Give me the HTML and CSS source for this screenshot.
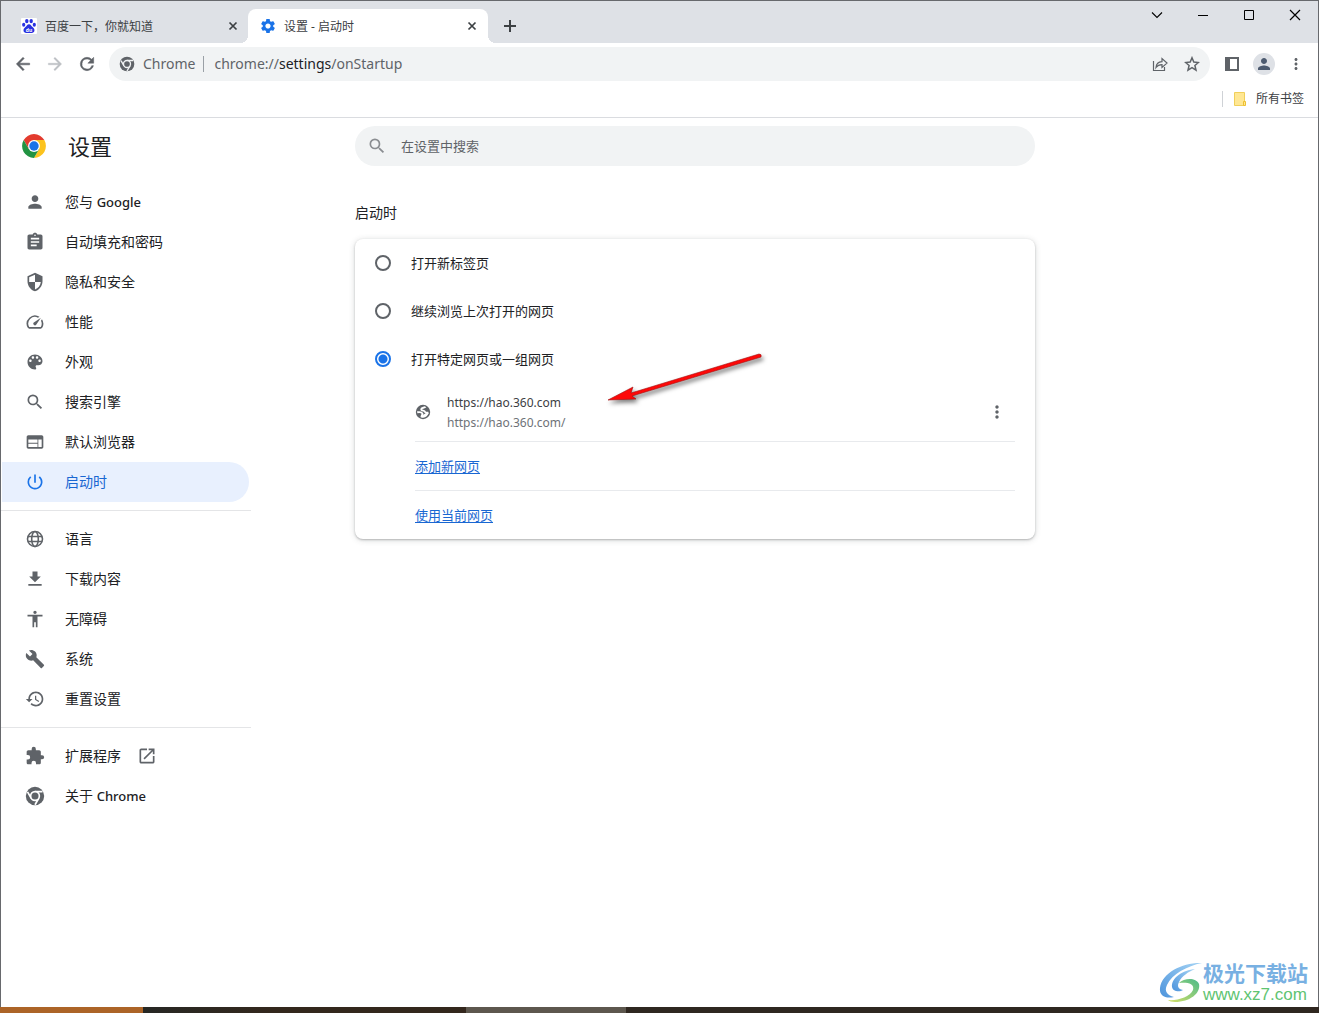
FILE: index.html
```html
<!DOCTYPE html>
<html lang="zh-CN">
<head>
<meta charset="utf-8">
<title>设置 - 启动时</title>
<link rel="stylesheet" href="styles.css">
</head>
<body>
<svg class="defs" aria-hidden="true">
  <symbol id="i-close" viewBox="0 0 16 16"><path d="M4.500 4.500l7 7M11.500 4.500l-7 7" fill="none" stroke="currentColor" stroke-width="1.700"/></symbol>
  <symbol id="i-search" viewBox="0 0 24 24"><path d="M15.500 14h-.79l-.28-.27A6.470 6.470 0 0 0 16 9.500 6.500 6.500 0 1 0 9.500 16c1.610 0 3.090-.59 4.230-1.570l.27.28v.79l5 4.990L20.490 19l-4.990-5zm-6 0C7.010 14 5 11.990 5 9.500S7.010 5 9.500 5 14 7.010 14 9.500 11.990 14 9.500 14z"/></symbol>
  <symbol id="i-person" viewBox="0 0 24 24"><path d="M12 12c2.210 0 4-1.790 4-4s-1.790-4-4-4-4 1.790-4 4 1.790 4 4 4zm0 2c-2.670 0-8 1.340-8 4v2h16v-2c0-2.660-5.330-4-8-4z"/></symbol>
  <symbol id="i-dots" viewBox="0 0 24 24"><path d="M12 8c1.100 0 2-.9 2-2s-.9-2-2-2-2 .9-2 2 .9 2 2 2zm0 2c-1.100 0-2 .9-2 2s.9 2 2 2 2-.9 2-2-.9-2-2-2zm0 6c-1.100 0-2 .9-2 2s.9 2 2 2 2-.9 2-2-.9-2-2-2z"/></symbol>
  <symbol id="i-chrome" viewBox="0 0 48 48">
    <mask id="m-chrome"><rect width="48" height="48" fill="#fff"/><path d="M24 13.500h18M15 29.500L6 14M33 29.500L24 45" fill="none" stroke="#000" stroke-width="4"/><circle cx="24" cy="24" r="12.500" fill="#000"/><circle cx="24" cy="24" r="8.500" fill="#fff"/></mask>
    <circle cx="24" cy="24" r="22" mask="url(#m-chrome)"/>
  </symbol>
</svg>

<div class="window">
  <header class="titlebar">
    <div class="tabs">
      <div class="tab">
        <svg class="ic16" viewBox="0 0 16 16"><rect width="16" height="16" rx="1" fill="#fff"/><g fill="#2932e1"><ellipse cx="5.800" cy="3.100" rx="1.700" ry="2.200"/><ellipse cx="10.200" cy="3.100" rx="1.700" ry="2.200"/><ellipse cx="2.700" cy="6.700" rx="1.600" ry="2"/><ellipse cx="13.300" cy="6.700" rx="1.600" ry="2"/><path d="M8 6.200c1.900 0 2.200 1.700 3.600 2.800 2.900 2.200 2.300 6-.9 6H5.300c-3.200 0-3.800-3.800-.9-6C5.800 7.900 6.100 6.200 8 6.200z"/></g><text x="8" y="13.500" text-anchor="middle" class="paw">du</text></svg>
        <span class="tab-title">百度一下，你就知道</span>
        <button class="plain" aria-label="关闭"><svg class="ic16"><use href="#i-close"/></svg></button>
      </div>
      <div class="tab active">
        <svg class="ic16 gear" viewBox="1 1 22 22"><path d="M19.140 12.940c.04-.3.060-.61.060-.94 0-.32-.02-.64-.07-.94l2.030-1.580c.18-.14.230-.41.120-.61l-1.920-3.320c-.12-.22-.37-.29-.59-.22l-2.390.96c-.5-.38-1.030-.7-1.620-.94l-.36-2.540c-.04-.24-.24-.41-.48-.41h-3.840c-.24 0-.43.17-.47.41l-.36 2.540c-.59.24-1.130.57-1.620.94l-2.390-.96c-.22-.08-.47 0-.59.22L2.740 8.870c-.12.21-.08.47.12.61l2.030 1.580c-.05.3-.09.63-.09.94s.02.64.07.94l-2.030 1.580c-.18.14-.23.41-.12.61l1.920 3.320c.12.22.37.29.59.22l2.390-.96c.5.38 1.030.7 1.620.94l.36 2.540c.05.24.24.41.48.41h3.840c.24 0 .44-.17.47-.41l.36-2.540c.59-.24 1.130-.56 1.620-.94l2.390.96c.22.08.47 0 .59-.22l1.920-3.320c.12-.22.07-.47-.12-.61l-2.010-1.580zM12 15.600c-1.980 0-3.600-1.620-3.600-3.600s1.620-3.600 3.600-3.600 3.600 1.620 3.600 3.600-1.620 3.600-3.600 3.600z"/></svg>
        <span class="tab-title">设置 - 启动时</span>
        <button class="plain" aria-label="关闭"><svg class="ic16"><use href="#i-close"/></svg></button>
      </div>
      <button class="plain new-tab" aria-label="新标签页"><svg class="ic16" viewBox="0 0 16 16"><path d="M8 2v12M2 8h12" fill="none" stroke="currentColor" stroke-width="2"/></svg></button>
    </div>
    <div class="caption">
      <button class="plain" aria-label="搜索标签页"><svg class="ic16" viewBox="0 0 16 16"><path d="M3 5.500l5 5 5-5" fill="none" stroke="currentColor" stroke-width="1.100"/></svg></button>
      <button class="plain" aria-label="最小化"><svg class="ic16" viewBox="0 0 16 16"><path d="M3 8.500h10" fill="none" stroke="currentColor"/></svg></button>
      <button class="plain" aria-label="最大化"><svg class="ic16" viewBox="0 0 16 16"><path d="M3.500 3.500h9v9h-9z" fill="none" stroke="currentColor"/></svg></button>
      <button class="plain" aria-label="关闭窗口"><svg class="ic16" viewBox="0 0 16 16"><path d="M3 3l10 10M13 3L3 13" fill="none" stroke="currentColor" stroke-width="1.200"/></svg></button>
    </div>
  </header>

  <div class="toolbar">
    <button class="plain tool" aria-label="后退"><svg class="ic20" viewBox="0 0 24 24"><path d="M20 11H7.830l5.590-5.590L12 4l-8 8 8 8 1.410-1.410L7.830 13H20z" stroke="currentColor" stroke-width=".6"/></svg></button>
    <button class="plain tool" aria-label="前进" disabled><svg class="ic20" viewBox="0 0 24 24"><path d="M4 11h12.170l-5.590-5.590L12 4l8 8-8 8-1.410-1.410L16.170 13H4z" stroke="currentColor" stroke-width=".4"/></svg></button>
    <button class="plain tool" aria-label="重新加载"><svg class="ic20" viewBox="0 0 24 24"><path d="M17.650 6.350A7.960 7.960 0 0 0 12 4a8 8 0 1 0 7.730 10h-2.080A6 6 0 1 1 12 6c1.660 0 3.140.69 4.220 1.780L13 11h7V4z" stroke="currentColor" stroke-width=".6"/></svg></button>
    <div class="omnibox">
      <svg class="ic16"><use href="#i-chrome"/></svg>
      <span class="origin">Chrome</span>
      <span class="url">chrome://<b>settings</b>/onStartup</span>
      <button class="plain tool" aria-label="分享"><svg class="ic16" viewBox="0 0 16 16"><path d="M1.500 5v9.500h11V11M4 11.500C4.300 7.500 6.500 5.800 10 5.600V2.500l5 4.600-5 4.400V8.600c-2.800 0-4.600.9-6 2.900z" fill="none" stroke="currentColor" stroke-width="1.200"/></svg></button>
      <button class="plain tool" aria-label="收藏"><svg class="ic16" viewBox="0 0 16 16"><path d="M8 1.800l1.800 4.300 4.600.4-3.500 3 1.100 4.600L8 11.700l-4 2.400 1.100-4.600-3.500-3 4.600-.4z" fill="none" stroke="currentColor" stroke-width="1.500"/></svg></button>
    </div>
    <button class="plain tool panel" aria-label="侧边栏"><svg class="ic16" viewBox="0 0 16 16"><path d="M1 1h14v14H1zM6 3v10h7V3z" fill-rule="evenodd"/></svg></button>
    <button class="plain tool" aria-label="用户"><span class="avatar"><svg class="ic18"><use href="#i-person"/></svg></span></button>
    <button class="plain tool" aria-label="更多"><svg class="ic18"><use href="#i-dots"/></svg></button>
  </div>

  <div class="bookmarks">
    <button class="plain all-bookmarks"><svg class="ic16" viewBox="0 0 16 16"><path d="M2.500 1.500h10v13h-10z" fill="#ffe793" stroke="#f0cf5a"/><path d="M11.500 10.500h2v4h-2z" fill="#ffe793" stroke="#eec030"/></svg>所有书签</button>
  </div>

  <div class="settings">
    <aside class="side">
      <div class="brand">
        <svg class="logo" viewBox="0 0 48 48"><path fill="#e33b2e" d="M4.950 13A22 22 0 0 1 43.050 13H24L14.470 29.500z"/><path fill="#fcc31e" d="M43.050 13A22 22 0 0 1 24 46l9.530-16.500L24 13z"/><path fill="#229342" d="M24 46A22 22 0 0 1 4.950 13l9.520 16.500h19.060z"/><circle cx="24" cy="24" r="11" fill="#fff"/><circle cx="24" cy="24" r="8.700" fill="#1a73e8"/></svg>
        <h1>设置</h1>
      </div>
      <nav>
        <a href="#people"><svg class="ic20"><use href="#i-person"/></svg><span>您与 <span class="latin">Google</span></span></a>
        <a href="#autofill"><svg class="ic20" viewBox="0 0 24 24"><path d="M19 3h-4.180C14.400 1.840 13.300 1 12 1c-1.300 0-2.400.84-2.820 2H5c-1.100 0-2 .9-2 2v14c0 1.100.9 2 2 2h14c1.100 0 2-.9 2-2V5c0-1.100-.9-2-2-2zm-7 0c.55 0 1 .45 1 1s-.45 1-1 1-1-.45-1-1 .45-1 1-1zm2 14H7v-2h7v2zm3-4H7v-2h10v2zm0-4H7V7h10v2z"/></svg>自动填充和密码</a>
        <a href="#privacy"><svg class="ic20" viewBox="0 0 24 24"><path d="M12 1L3 5v6c0 5.550 3.840 10.740 9 12 5.160-1.260 9-6.450 9-12V5l-9-4zm0 10.990h7c-.53 4.120-3.280 7.790-7 8.940V12H5V6.300l7-3.110v8.800z"/></svg>隐私和安全</a>
        <a href="#performance"><svg class="ic20" viewBox="0 0 24 24"><path d="M20.380 8.570l-1.230 1.850a8 8 0 0 1-.22 7.580H5.070A8 8 0 0 1 15.580 6.850l1.850-1.230A10 10 0 0 0 3.350 19a2 2 0 0 0 1.720 1h13.850a2 2 0 0 0 1.740-1 10 10 0 0 0-.27-10.440zm-9.790 6.840a2 2 0 0 0 2.830 0l5.660-8.490-8.490 5.660a2 2 0 0 0 0 2.830z"/></svg>性能</a>
        <a href="#appearance"><svg class="ic20" viewBox="0 0 24 24"><path d="M12 3c-4.970 0-9 4.030-9 9s4.030 9 9 9c.83 0 1.500-.67 1.500-1.500 0-.39-.15-.74-.39-1.010-.23-.26-.38-.61-.38-.99 0-.83.67-1.500 1.500-1.500H16c2.760 0 5-2.240 5-5 0-4.420-4.030-8-9-8zm-5.500 9c-.83 0-1.500-.67-1.500-1.500S5.670 9 6.500 9 8 9.670 8 10.500 7.330 12 6.500 12zm3-4C8.670 8 8 7.330 8 6.500S8.670 5 9.500 5s1.500.67 1.500 1.500S10.330 8 9.500 8zm5 0c-.83 0-1.500-.67-1.500-1.500S13.670 5 14.500 5s1.500.67 1.500 1.500S15.330 8 14.500 8zm3 4c-.83 0-1.500-.67-1.500-1.500S16.670 9 17.500 9s1.500.67 1.500 1.500-.67 1.500-1.500 1.500z"/></svg>外观</a>
        <a href="#search"><svg class="ic20"><use href="#i-search"/></svg>搜索引擎</a>
        <a href="#default"><svg class="ic20" viewBox="0 0 24 24"><path d="M20 4H4c-1.100 0-2 .9-2 2v12c0 1.100.9 2 2 2h16c1.100 0 2-.9 2-2V6c0-1.100-.9-2-2-2zm-5 14H4v-4h11v4zm0-5H4V9h11v4zm5 5h-4V9h4v9z"/></svg>默认浏览器</a>
        <a href="#startup" class="selected" aria-current="page"><svg class="ic20" viewBox="0 0 24 24"><path d="M13 3h-2v10h2V3zm4.830 2.170l-1.420 1.420A6.920 6.920 0 0 1 19 12a7 7 0 1 1-11.420-5.420L6.170 5.170A8.930 8.930 0 0 0 3 12a9 9 0 1 0 14.830-6.830z"/></svg>启动时</a>
        <hr>
        <a href="#languages"><svg class="ic20" viewBox="0 0 24 24"><g fill="none" stroke="currentColor" stroke-width="1.900"><circle cx="12" cy="12" r="9"/><ellipse cx="12" cy="12" rx="4" ry="9"/><path d="M3.500 9h17M3.500 15h17"/></g></svg>语言</a>
        <a href="#downloads"><svg class="ic20" viewBox="0 0 24 24"><path d="M19 9h-4V3H9v6H5l7 7 7-7zM4 18v2h16v-2z"/></svg>下载内容</a>
        <a href="#accessibility"><svg class="ic20" viewBox="0 0 24 24"><path d="M12 2c1.100 0 2 .9 2 2s-.9 2-2 2-2-.9-2-2 .9-2 2-2zm9 7h-6v13h-2v-6h-2v6H9V9H3V7h18v2z"/></svg>无障碍</a>
        <a href="#system"><svg class="ic20" viewBox="0 0 24 24"><path d="M22.700 19l-9.100-9.100c.9-2.300.4-5-1.500-6.900-2-2-5-2.400-7.400-1.300L9 6 6 9 1.600 4.700C.4 7.100.9 10.100 2.900 12.100c1.900 1.900 4.600 2.400 6.900 1.500l9.100 9.100c.4.4 1 .4 1.400 0l2.300-2.300c.5-.4.5-1.100.1-1.400z"/></svg>系统</a>
        <a href="#reset"><svg class="ic20" viewBox="0 0 24 24"><path d="M13 3c-4.970 0-9 4.030-9 9H1l3.890 3.890.07.14L9 12H6c0-3.870 3.130-7 7-7s7 3.130 7 7-3.130 7-7 7c-1.930 0-3.680-.79-4.940-2.060l-1.420 1.420C8.270 19.990 10.510 21 13 21c4.970 0 9-4.030 9-9s-4.030-9-9-9zm-1 5v5l4.280 2.540.72-1.210-3.500-2.080V8H12z"/></svg>重置设置</a>
        <hr>
        <a href="#extensions"><svg class="ic20" viewBox="0 0 24 24"><path d="M20.500 11H19V7c0-1.100-.9-2-2-2h-4V3.500a2.500 2.500 0 0 0-5 0V5H4c-1.100 0-2 .9-2 2v3.800h1.500a2.700 2.700 0 0 1 0 5.400H2V20c0 1.100.9 2 2 2h3.800v-1.500a2.700 2.700 0 0 1 5.400 0V22H17c1.100 0 2-.9 2-2v-4h1.500a2.500 2.500 0 0 0 0-5z"/></svg><span class="external">扩展程序<svg class="ic20" viewBox="0 0 24 24"><path d="M19 19H5V5h7V3H5c-1.110 0-2 .9-2 2v14c0 1.100.89 2 2 2h14c1.100 0 2-.9 2-2v-7h-2v7zM14 3v2h3.590l-9.830 9.830 1.410 1.410L19 6.410V10h2V3h-7z"/></svg></span></a>
        <a href="#about"><svg class="ic20"><use href="#i-chrome"/></svg><span>关于 <span class="latin">Chrome</span></span></a>
      </nav>
    </aside>

    <main>
      <label class="search">
        <svg class="ic20"><use href="#i-search"/></svg>
        <input type="search" placeholder="在设置中搜索" aria-label="在设置中搜索">
      </label>
      <h2>启动时</h2>
      <section class="card">
        <label class="option"><input type="radio" name="startup">打开新标签页</label>
        <label class="option"><input type="radio" name="startup">继续浏览上次打开的网页</label>
        <label class="option"><input type="radio" name="startup" checked>打开特定网页或一组网页</label>
        <div class="pages">
          <div class="row site">
            <svg class="ic16" viewBox="0 0 16 16"><circle cx="8" cy="8" r="7.200"/><path fill="none" stroke="#fff" stroke-width="1.900" d="M10.500 2.700C9.500 4.200 6.200 3.400 6.200 5.300c0 1.800 3.400.9 3.900 2.600.3 1.100 1.700 1 3.400.7"/><path fill="none" stroke="#fff" stroke-width="1.900" d="M2.200 8.300c1.800-.3 4.600-.2 5.200 1.200.5 1.300-1.200 1.500-.9 3.700"/><path fill="#fff" d="M6.500 11.500l5.500-2.700 1.600.2c-.6 2.500-2.700 4.500-5.400 4.700H6.300z"/></svg>
            <div class="site-text"><span>https://hao.360.com</span><span class="muted">https://hao.360.com/</span></div>
            <button class="plain more" aria-label="更多操作"><svg class="ic20"><use href="#i-dots"/></svg></button>
          </div>
          <div class="row"><a href="#add">添加新网页</a></div>
          <div class="row"><a href="#current">使用当前网页</a></div>
        </div>
        <svg class="arrow" viewBox="0 0 168 60" aria-hidden="true"><path d="M3 50l25-13-2 6L154 4q3 0 2 3L27 46l4 3z" fill="#fd0808" stroke="#a01010" stroke-width=".6"/></svg>
      </section>
    </main>
  </div>

  <div class="watermark">
    <svg viewBox="0 0 44 42" aria-hidden="true"><defs><linearGradient id="wb" x1="0" y1="1" x2="1" y2="0"><stop offset="0" stop-color="#4d94dc"/><stop offset="1" stop-color="#a5d4f5"/></linearGradient><linearGradient id="wg" x1="0" y1="1" x2="1" y2="0"><stop offset="0" stop-color="#d5df66"/><stop offset="1" stop-color="#4dbb8b"/></linearGradient></defs><path fill="url(#wb)" d="M43 1C25 0 3 10 1 26c-1 8 6 11 14 9C8 33 5 29 8 23 13 12 28 4 43 1z"/><path fill="url(#wb)" d="M36 7C24 8 12 16 13 25c1 5 8 5 11 3-5-1-6-4-4-8 3-6 9-10 16-13z"/><path fill="url(#wg)" d="M20 21c5-5 17-6 20 1 2 9-9 18-24 18-3 0-6-1-7-2 9 1 22-3 25-10 2-7-7-8-14-7z"/></svg>
    <div class="mark-text"><span class="mark-name">极光下载站</span><span class="mark-url">www.xz7.com</span></div>
  </div>
</div>
<footer class="taskbar"><span class="seg orange"></span><span class="seg dark"></span><span class="seg light"></span></footer>
</body>
</html>
```
FILE: styles.css
```css
* { box-sizing: border-box; }

body {
  margin: 0;
  min-height: 100vh;
  display: flex;
  flex-direction: column;
  background: #fff;
  color: #202124;
  font: 13px/20px "Noto Sans", "Noto Sans CJK SC", sans-serif;
}

svg { display: block; flex: none; fill: currentColor; }
.defs { position: absolute; width: 0; height: 0; }
.ic16 { width: 16px; height: 16px; }
.ic18 { width: 18px; height: 18px; }
.ic20 { width: 20px; height: 20px; }
.logo { width: 26px; height: 26px; }

.plain {
  display: flex;
  align-items: center;
  justify-content: center;
  padding: 0;
  border: 0;
  background: none;
  color: inherit;
  font: inherit;
}

.window {
  position: relative;
  flex: 1;
  display: flex;
  flex-direction: column;
  border: 1px solid #67696d;
  border-bottom: 0;
}

/* Tab strip */
.titlebar {
  display: flex;
  justify-content: space-between;
  height: 42px;
  padding-top: 8px;
  background: #dee1e6;
}
.tabs { display: flex; padding-left: 7px; }
.tab {
  display: flex;
  align-items: center;
  gap: 8px;
  width: 240px;
  padding: 0 7px 0 13px;
  color: #3c4043;
  font-size: 12px;
}
.tab.active { position: relative; padding: 0 8px 0 12px; background: #fff; border-radius: 8px 8px 0 0; }
.tab.active::before,
.tab.active::after {
  content: "";
  position: absolute;
  bottom: 0;
  width: 8px;
  height: 8px;
}
.tab.active::before { right: 100%; background: radial-gradient(circle at 0 0, #dee1e6 8px, #fff 8px); }
.tab.active::after { left: 100%; background: radial-gradient(circle at 100% 0, #dee1e6 8px, #fff 8px); }
.tab-title { flex: 1; padding-top: 2px; white-space: nowrap; }
.gear { color: #1a73e8; }
.paw { font: bold 5px "Noto Sans", sans-serif; fill: #fff; }
.new-tab { width: 44px; color: #3c4043; }
.caption { display: flex; height: 28px; margin-top: -8px; color: #000; }
.caption button { width: 46px; }

/* Toolbar */
.toolbar {
  display: flex;
  align-items: center;
  height: 42px;
  padding: 0 6px;
  color: #5f6368;
}
.tool { width: 32px; height: 32px; }
.tool:disabled { color: #bdc0c4; }
.panel { margin-left: 6px; }
.omnibox {
  flex: 1;
  display: flex;
  align-items: center;
  height: 34px;
  margin-left: 6px;
  padding: 0 2px 0 10px;
  border-radius: 17px;
  background: #f1f3f4;
  font-size: 14px;
}
.origin {
  margin-left: 8px;
  padding-right: 8px;
  border-right: 1px solid #9aa0a6;
  line-height: 16px;
}
.url { flex: 1; padding-left: 10px; }
.url b { color: #202124; font-weight: 400; }
.avatar {
  display: grid;
  place-items: center;
  width: 22px;
  height: 22px;
  border-radius: 50%;
  background: #dee1e6;
  color: #4d5b70;
}

.bookmarks {
  display: flex;
  justify-content: flex-end;
  align-items: center;
  height: 33px;
  padding: 0 14px 4px 0;
  border-bottom: 1px solid #dadce0;
}
.all-bookmarks {
  gap: 8px;
  height: 16px;
  padding-left: 9px;
  border-left: 1px solid #cfd2d6;
  color: #3c4043;
  font-size: 12px;
}

/* Settings page */
.settings { flex: 1; display: flex; align-items: flex-start; }
.side { flex: none; width: 250px; }
.brand {
  display: flex;
  align-items: center;
  gap: 21px;
  height: 56px;
  padding-left: 20px;
}
h1 { margin: 0; font-size: 22px; line-height: 32px; font-weight: 400; }
nav { padding-top: 8px; }
nav a {
  display: flex;
  align-items: center;
  gap: 20px;
  height: 40px;
  margin: 0 2px 0 1px;
  padding-left: 23px;
  border-radius: 0 20px 20px 0;
  color: #202124;
  font-size: 14px;
  text-decoration: none;
}
nav svg { color: #5f6368; }
nav .selected { background: #e8f0fe; color: #1967d2; }
nav .selected svg { color: #1a73e8; }
nav hr { margin: 8px 0; border: 0; border-top: 1px solid #e4e5e7; }
.latin { font-size: 13px; font-weight: 500; }
.external { display: flex; align-items: center; gap: 16px; }

main { flex: 1; max-width: 784px; padding: 8px 0 0 104px; }
.search {
  display: flex;
  align-items: center;
  gap: 14px;
  height: 40px;
  padding: 0 12px;
  border-radius: 20px;
  background: #f1f3f4;
  color: #8a8d91;
}
.search input {
  flex: 1;
  padding: 0;
  border: 0;
  outline: 0;
  background: none;
  font: inherit;
  color: #202124;
}
.search input::placeholder { color: #5f6368; opacity: 1; }
h2 { margin: 36px 0 16px; font-size: 14px; line-height: 21px; font-weight: 400; }

.card {
  position: relative;
  border-radius: 8px;
  background: #fff;
  box-shadow: 0 1px 2px rgba(60, 64, 67, .3), 0 1px 6px rgba(60, 64, 67, .2);
}
.option { display: flex; align-items: center; gap: 20px; height: 48px; padding-left: 20px; }
.option input {
  appearance: none;
  width: 16px;
  height: 16px;
  margin: 0;
  border: 2px solid #5f6368;
  border-radius: 50%;
}
.option input:checked {
  border-color: #1a73e8;
  background: radial-gradient(circle, #1a73e8 4px, #fff 5px);
}
.pages { margin: 0 20px 0 60px; }
.row { display: flex; align-items: center; height: 48px; }
.row + .row { height: 49px; border-top: 1px solid #e8eaed; }
.row a { color: #1967d2; text-underline-offset: 2px; }
.row.site { height: 58px; gap: 16px; color: #5f6368; }
.site-text { flex: 1; display: flex; flex-direction: column; padding-top: 2px; color: #3c4043; font-size: 12px; }
.site-text .muted { color: #6e7277; }
.more { width: 36px; height: 36px; }

.arrow {
  position: absolute;
  left: 250px;
  top: 111px;
  width: 168px;
  height: 60px;
  filter: drop-shadow(2px 3px 2px rgba(0, 0, 0, .5));
}

/* Site stamp in the corner */
.watermark {
  position: absolute;
  right: 10px;
  bottom: 2px;
  display: flex;
  align-items: center;
}
.watermark svg { width: 44px; height: 42px; }
.mark-text { display: flex; flex-direction: column; }
.mark-name { color: #78b0e2; font-size: 21px; line-height: 24px; font-weight: 700; }
.mark-url { color: #5fc472; font: 17px/20px "Liberation Sans", sans-serif; }

.taskbar { display: flex; height: 6px; background: #2f2720; }
.orange { width: 143px; background: #ac6427; }
.dark { width: 323px; background: linear-gradient(90deg, #272824, #33271d 40%); }
.light { width: 160px; background: #5d574e; }
```
